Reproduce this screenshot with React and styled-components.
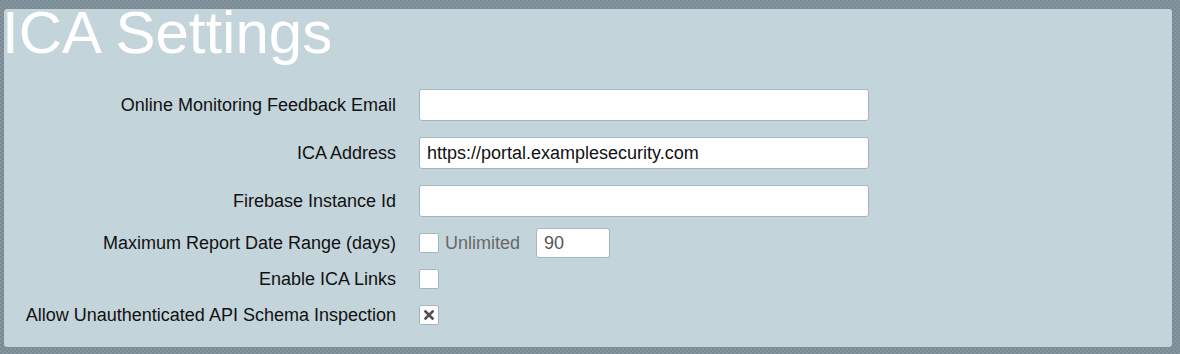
import React from "react";
import styled, { createGlobalStyle } from "styled-components";

const GlobalStyle = createGlobalStyle`
	html, body {
		margin: 0;
		padding: 0;
	}
	body {
		width: 1180px;
		height: 354px;
		overflow: hidden;
		font-family: "Liberation Sans", Arial, sans-serif;
		background-color: #7f8f99;
		background-image: repeating-conic-gradient(#86969f 0% 25%, #7a8a94 0% 50%);
		background-size: 4px 4px;
	}
`;

const Page = styled.div`
	padding: 9px 8px 6px 4px;
`;

const Panel = styled.section`
	background: #c4d4db;
	border-radius: 3px;
	padding: 1px 0 14px 0;
	box-shadow: 0 0 1px rgba(90, 110, 120, 0.6);
`;

const Title = styled.h1`
	margin: -12px 0 14px -2px;
	font-size: 60px;
	font-weight: normal;
	line-height: normal;
	color: #ffffff;
`;

const Row = styled.div`
	display: grid;
	grid-template-columns: 392px 1fr;
	column-gap: 23px;
	align-items: center;
	height: ${({ tall }) => (tall ? "48px" : "36px")};
`;

const Label = styled.label`
	text-align: right;
	font-size: 18px;
	color: #111;
`;

const Controls = styled.div`
	display: flex;
	align-items: center;
	gap: 6px;
`;

const TextInput = styled.input`
	box-sizing: border-box;
	width: 450px;
	height: 32px;
	padding: 0 7px;
	border: 1px solid #a3b6c2;
	border-radius: 3px;
	background: #fff;
	font-family: inherit;
	font-size: 18px;
	color: #111;
	outline: none;
`;

const NumberInput = styled(TextInput)`
	width: 74px;
	height: 30px;
	margin-left: 10px;
	color: #555;
`;

const Box = styled.span`
	box-sizing: border-box;
	display: inline-flex;
	align-items: center;
	justify-content: center;
	width: 20px;
	height: 20px;
	background: #fff;
	border: 1px solid #a3b6c2;
	border-radius: 2px;
`;

const Hint = styled.span`
	font-size: 18px;
	color: #686868;
`;

const Checkbox = ({ checked }) => (
	<Box>
		{
			checked &&
			<svg width="12" height="12" viewBox="0 0 12 12">
				<path d="M2.5 2.5 L9.5 9.5 M9.5 2.5 L2.5 9.5" stroke="#505050" strokeWidth="2.6" strokeLinecap="square" />
			</svg>
		}
	</Box>
);

const App = () => (
	<Page>
		<GlobalStyle />
		<Panel>
			<Title>ICA Settings</Title>

			<Row tall>
				<Label>Online Monitoring Feedback Email</Label>
				<Controls>
					<TextInput defaultValue="" />
				</Controls>
			</Row>
			<Row tall>
				<Label>ICA Address</Label>
				<Controls>
					<TextInput defaultValue="https://portal.examplesecurity.com" />
				</Controls>
			</Row>
			<Row tall>
				<Label>Firebase Instance Id</Label>
				<Controls>
					<TextInput defaultValue="" />
				</Controls>
			</Row>

			<Row>
				<Label>Maximum Report Date Range (days)</Label>
				<Controls>
					<Checkbox />
					<Hint>Unlimited</Hint>
					<NumberInput defaultValue="90" />
				</Controls>
			</Row>
			<Row>
				<Label>Enable ICA Links</Label>
				<Controls>
					<Checkbox />
				</Controls>
			</Row>
			<Row>
				<Label>Allow Unauthenticated API Schema Inspection</Label>
				<Controls>
					<Checkbox checked />
				</Controls>
			</Row>
		</Panel>
	</Page>
);

export default App;
